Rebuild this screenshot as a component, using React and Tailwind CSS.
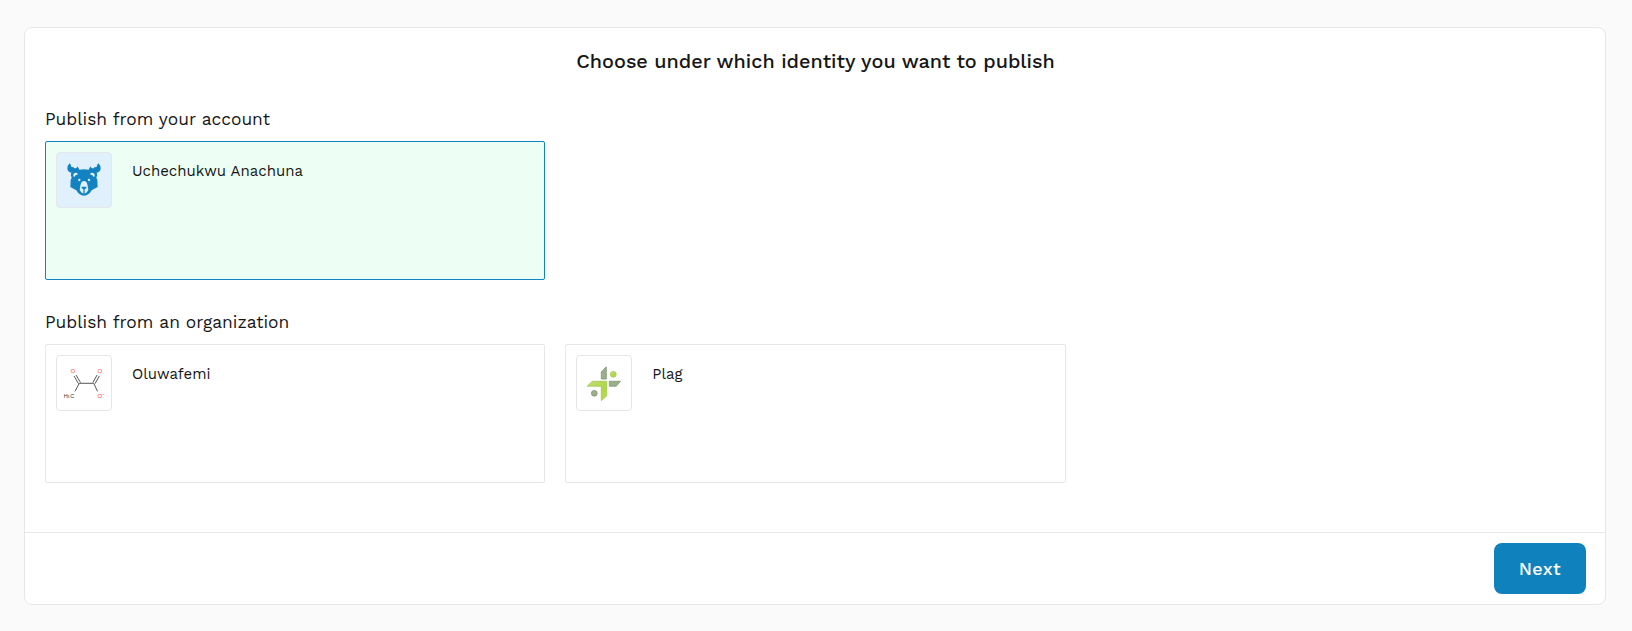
function Bear() {
  return (
    <svg viewBox="51 51 162 162" className="size-full">
      <path
        fill="#1283c0"
        d="M89 82Q94 86 93 91L96 94L100 93L103 97H108Q112 95 111 91Q116 95 118 101Q132 99 146 101Q148 95 153 91Q152 95 156 97H161L164 93L168 94L171 91Q170 86 175 82Q183 89 182 99Q180 108 170 110Q174 118 169 125L172 132L173 153L155 163Q146 179 132 179Q118 179 109 163L91 153L92 132L95 125Q90 118 94 110Q84 108 82 99Q81 89 89 82Z"
      />
      <g fill="#e0f0fc">
        <path d="M102 124Q97 115 104 111Q113 109 114 115Q106 116 102 124Z" />
        <path d="M162 124Q167 115 160 111Q151 109 150 115Q158 116 162 124Z" />
        <circle cx="118" cy="132" r="3.500" />
        <circle cx="147" cy="132" r="3.500" />
        <path d="M132 135Q139 135 142 145L145 161Q142 170 134 173L133.800 160L139 157V152H125V157L130.200 160L130 173Q122 170 119 161L122 145Q125 135 132 135Z" />
      </g>
    </svg>
  );
}

function Molecule() {
  return (
    <svg viewBox="0 0 54 54" className="size-full">
      <g stroke="#444" strokeWidth="0.9" fill="none">
        <path d="M18 35.300L22.300 27.300H36.700L40.500 35.300" />
        <path d="M21.500 27.700L17 20M23.500 26.500L19 19M35.900 26.500L40.100 19M38 27.700L42.300 20" />
      </g>
      <g fontFamily="Liberation Sans, sans-serif" fontSize="6" fill="#ff4848">
        <text x="13.400" y="17.400">O</text>
        <text x="40.400" y="17.400">O</text>
        <text x="40.400" y="41.500">O</text>
        <text x="44.900" y="39.800" fontSize="5">−</text>
      </g>
      <g fontFamily="Liberation Sans, sans-serif" fontSize="5.500" fill="#333">
        <text x="6.700" y="41.500">H</text>
        <text x="10.600" y="42.300" fontSize="3.500">3</text>
        <text x="13.200" y="41.500">C</text>
      </g>
    </svg>
  );
}

function Leaves() {
  return (
    <svg viewBox="1 1 54 54" className="size-full">
      <defs>
        <linearGradient id="lime" x1="0" y1="0" x2="1" y2="1">
          <stop offset="0" stopColor="#c3dc78" />
          <stop offset="0.600" stopColor="#b0d844" />
          <stop offset="1" stopColor="#b5dc50" />
        </linearGradient>
      </defs>
      <g fill="#9caf8b" stroke="#7f9678" strokeWidth="0.800">
        <path d="M30.300 11.800V24H25.300V16.800Z" />
        <path d="M33.300 26.300H44.500L40.300 31.200H33.300Z" />
        <circle cx="18.300" cy="38.300" r="2.900" />
      </g>
      <g fill="url(#lime)" stroke="#a3c455" strokeWidth="0.800">
        <path d="M11.200 31.200L16.400 26.300H30.700V40.800L25.300 45.700V31.200Z" />
        <circle cx="37.300" cy="19.300" r="2.900" />
      </g>
    </svg>
  );
}

function Identity({ name, selected, children }) {
  return (
    <button
      className={
        selected
          ? "flex h-[139px] items-start rounded-xs border border-[#1283bd] bg-[#edfff5] p-2.5 text-left"
          : "flex h-[139px] items-start rounded-xs border border-gray-200 bg-white p-2.5 text-left"
      }
    >
      <span
        className={
          selected
            ? "size-14 shrink-0 overflow-hidden rounded-sm border border-gray-200 bg-[#e0f0fc]"
            : "size-14 shrink-0 overflow-hidden rounded-sm border border-gray-200 bg-white"
        }
      >
        {children}
      </span>
      <span className="ml-5 mt-[9px] text-[15px] leading-5">{name}</span>
    </button>
  );
}

export default function App() {
  return (
    <div className="h-[631px] bg-[#fafafa] pt-[27px] pr-[26px] pl-6 font-['Work_Sans',Inter,sans-serif] text-[#161616]">
      <main className="flex h-[578px] flex-col rounded-lg border border-gray-200 bg-white">
        <div className="flex-1 pt-5 pr-[19px] pl-5">
          <h1 className="text-center text-[19.85px] leading-[27px] font-medium">
            Choose under which identity you want to publish
          </h1>
          <h2 className="mt-8 text-[17.4px] leading-6">Publish from your account</h2>
          <div className="mt-[10px] grid grid-cols-3 gap-5">
            <Identity name="Uchechukwu Anachuna" selected>
              <Bear />
            </Identity>
          </div>
          <h2 className="mt-[30px] text-[17.4px] leading-6">Publish from an organization</h2>
          <div className="mt-[10px] grid grid-cols-3 gap-5">
            <Identity name="Oluwafemi">
              <Molecule />
            </Identity>
            <Identity name="Plag">
              <Leaves />
            </Identity>
          </div>
        </div>
        <footer className="flex h-[72px] justify-end border-t border-gray-200 px-[19px] pt-[10px]">
          <button className="h-[51px] w-[92px] rounded-lg bg-[#0f82bd] text-[18px] font-medium tracking-[0.4px] text-white">
            Next
          </button>
        </footer>
      </main>
    </div>
  );
}
